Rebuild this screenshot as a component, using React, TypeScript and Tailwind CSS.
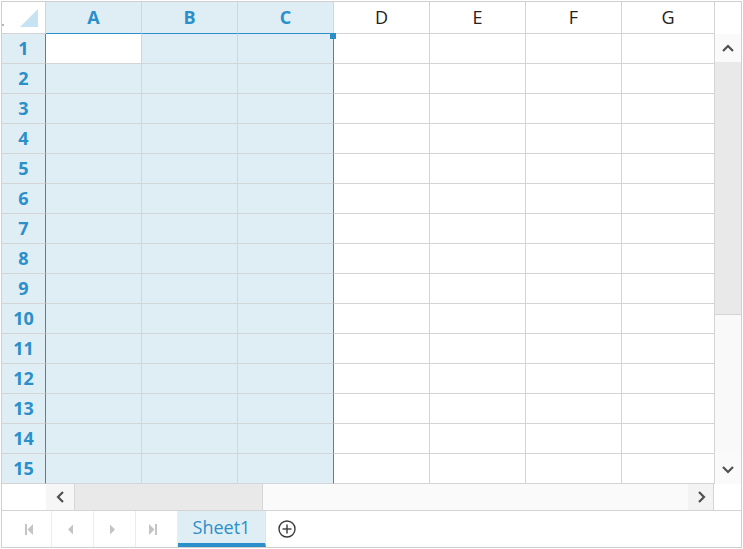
import React from 'react';

const cols = ['A', 'B', 'C', 'D', 'E', 'F', 'G'];
const rows = Array.from({ length: 15 }, (_, i) => i + 1);

function Chevron({ dir }: { dir: 'up' | 'down' | 'left' | 'right' }) {
  const pts: Record<string, string> = {
    up: '1,7 6,2 11,7',
    down: '1,2 6,7 11,2',
    left: '7,1 2,6 7,11',
    right: '2,1 7,6 2,11',
  };
  const vertical = dir === 'up' || dir === 'down';
  return (
    <svg width={vertical ? 12 : 9} height={vertical ? 9 : 12} viewBox={vertical ? '0 0 12 9' : '0 0 9 12'}>
      <polyline points={pts[dir]} fill="none" stroke="#505050" strokeWidth="2.2" strokeLinejoin="miter" />
    </svg>
  );
}

function HeaderCell({ c, i }: { c: string; i: number }) {
  if (i < 3) {
    return (
      <div className="w-[96px] h-full border-r border-b border-r-[#d4d4d4] border-b-[#2b8fca] bg-[#dfedf5] flex items-center justify-center text-[18px] font-bold text-[#2b8fca]">
        {c}
      </div>
    );
  }
  if (i === 6) {
    return (
      <div className="w-[93px] h-full border-r border-b border-[#d4d4d4] bg-white flex items-center justify-center text-[18px] text-[#222]">
        {c}
      </div>
    );
  }
  return (
    <div className="w-[96px] h-full border-r border-b border-[#d4d4d4] bg-white flex items-center justify-center text-[18px] text-[#222]">
      {c}
    </div>
  );
}

function Cell({ r, i }: { r: number; i: number }) {
  if (i < 2) {
    return <div className={r === 1 && i === 0 ? 'w-[96px] h-full border-r border-b border-[#d4d4d4] bg-white' : 'w-[96px] h-full border-r border-b border-[#d0d6da] bg-[#dfedf5]'} />;
  }
  if (i === 2) {
    return <div className="w-[96px] h-full border-r border-b border-b-[#d0d6da] border-r-[#2b8fca] bg-[#dfedf5]" />;
  }
  if (i === 6) {
    return <div className="w-[93px] h-full border-r border-b border-[#d4d4d4] bg-white" />;
  }
  return <div className="w-[96px] h-full border-r border-b border-[#d4d4d4] bg-white" />;
}

function NavIcon({ kind }: { kind: 'first' | 'prev' | 'next' | 'last' }) {
  return (
    <svg width="9" height="11" viewBox="0 0 9 11">
      {kind === 'first' && (
        <>
          <rect x="0" y="0" width="2" height="11" fill="#c4c4c4" />
          <polygon points="8,0 8,11 2.5,5.5" fill="#c4c4c4" />
        </>
      )}
      {kind === 'prev' && <polygon points="7,0.5 7,10.5 2,5.5" fill="#c4c4c4" />}
      {kind === 'next' && <polygon points="2,0.5 2,10.5 7,5.5" fill="#c4c4c4" />}
      {kind === 'last' && (
        <>
          <polygon points="0,0 0,11 5.5,5.5" fill="#c4c4c4" />
          <rect x="6" y="0" width="2" height="11" fill="#c4c4c4" />
        </>
      )}
    </svg>
  );
}

export default function App() {
  return (
    <div className="relative w-[743px] h-[549px] bg-white p-[1px] font-['Open_Sans','Noto_Sans',sans-serif]">
      <div className="w-[741px] h-[547px] border border-[#cfcfcf] flex flex-col">
        {/* grid + vertical scrollbar */}
        <div className="flex h-[482px]">
          <div className="w-[713px] flex flex-col">
            <div className="flex h-[32px]">
              <div className="relative w-[44px] h-full border-r border-b border-[#d4d4d4] bg-white">
                <svg className="absolute left-0 top-0" width="43" height="31" viewBox="0 0 43 31">
                  <polygon points="36,7 36,25 18,25" fill="#c6e3f4" />
                  <rect x="0" y="22" width="2" height="2" fill="#b5b5b5" />
                </svg>
              </div>
              {cols.map((c, i) => (
                <HeaderCell key={c} c={c} i={i} />
              ))}
            </div>
            {rows.map((r) => (
              <div key={r} className="flex h-[30px]">
                <div className="w-[44px] h-full border-r border-b border-r-[#2b8fca] border-b-[#d4d4d4] bg-[#dfedf5] flex items-center justify-center text-[18px] font-bold text-[#2b8fca]">
                  {r}
                </div>
                {cols.map((c, i) => (
                  <Cell key={c} r={r} i={i} />
                ))}
              </div>
            ))}
          </div>
          <div className="w-[26px] flex flex-col">
            <div className="h-[32px] bg-white" />
            <div className="h-[28px] bg-[#fafafa] flex items-center justify-center">
              <Chevron dir="up" />
            </div>
            <div className="h-[253px] bg-[#e9e9e9] border-b border-[#d4d4d4]" />
            <div className="h-[139px] bg-[#f9f9f9]" />
            <div className="h-[30px] bg-[#fafafa] flex items-center justify-center">
              <Chevron dir="down" />
            </div>
          </div>
        </div>
        {/* horizontal scrollbar */}
        <div className="flex h-[27px] border-b border-[#d4d4d4]">
          <div className="w-[44px] h-full bg-white" />
          <div className="w-[28px] h-full bg-[#f6f6f6] flex items-center justify-center">
            <Chevron dir="left" />
          </div>
          <div className="w-[189px] h-full bg-[#e9e9e9] border-l border-r border-[#d6d6d6]" />
          <div className="w-[425px] h-full bg-[#fafafa]" />
          <div className="w-[26px] h-full bg-[#f3f3f3] border-r border-[#d4d4d4] flex items-center justify-center pl-[2px]">
            <Chevron dir="right" />
          </div>
          <div className="flex-1 h-full bg-white" />
        </div>
        {/* tab bar */}
        <div className="flex h-[36px] bg-white items-stretch">
          <div className="w-[50px] border-r border-[#ececec] flex items-center pl-[23px]">
            <NavIcon kind="first" />
          </div>
          <div className="w-[42px] border-r border-[#ececec] flex items-center pl-[14px]">
            <NavIcon kind="prev" />
          </div>
          <div className="w-[42px] border-r border-[#ececec] flex items-center pl-[14px]">
            <NavIcon kind="next" />
          </div>
          <div className="w-[42px] border-r border-[#ececec] flex items-center pl-[13px]">
            <NavIcon kind="last" />
          </div>
          <div className="w-[88px] bg-[#dfedf5] border-r border-[#e2e2e2] border-b-[4px] border-b-[#2b8fca] flex items-center justify-center pt-[1px] text-[18px] text-[#2b8fca]">
            Sheet1
          </div>
          <div className="flex items-center pl-[12px]">
            <svg width="18" height="18" viewBox="0 0 18 18">
              <circle cx="9" cy="9" r="8" fill="none" stroke="#3a3a3a" strokeWidth="1.4" />
              <line x1="4.5" y1="9" x2="13.5" y2="9" stroke="#3a3a3a" strokeWidth="1.4" />
              <line x1="9" y1="4.5" x2="9" y2="13.5" stroke="#3a3a3a" strokeWidth="1.4" />
            </svg>
          </div>
        </div>
      </div>
      <div className="absolute left-[330px] top-[33px] w-[6px] h-[6px] bg-[#2b8fca]" />
    </div>
  );
}
